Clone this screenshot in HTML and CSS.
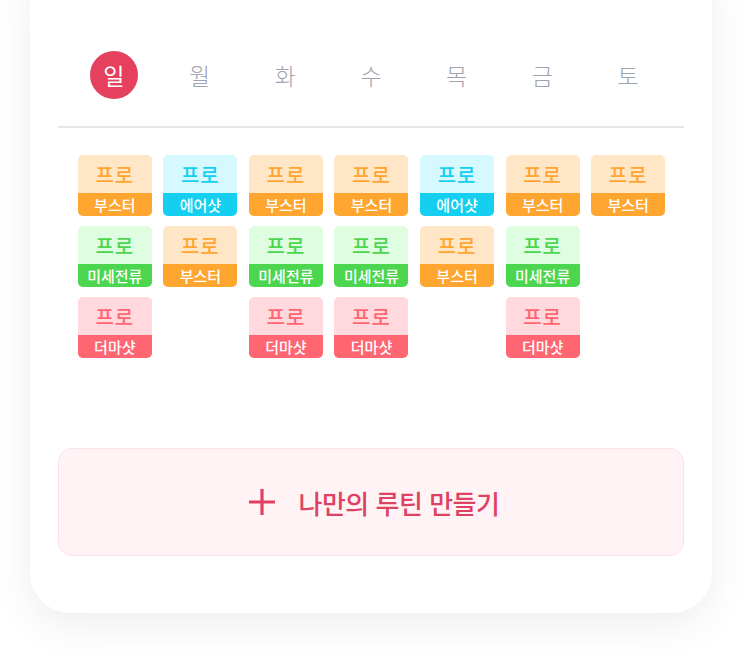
FILE: index.html
```html
<!DOCTYPE html>
<html lang="ko">
<head>
    <meta charset="UTF-8">
    <meta name="viewport" content="width=device-width, initial-scale=1.0">
    <title>루틴</title>
    <link rel="stylesheet" href="styles.css">
</head>
<body>
    <div class="card">
        <div class="days">
            <div class="day active">일</div>
            <div class="day">월</div>
            <div class="day">화</div>
            <div class="day">수</div>
            <div class="day">목</div>
            <div class="day">금</div>
            <div class="day">토</div>
        </div>

        <div class="divider"></div>

        <div class="tiles">
            <!-- row 1 -->
            <div class="tile orange"><span class="top">프로</span><span class="label">부스터</span></div>
            <div class="tile cyan"><span class="top">프로</span><span class="label">에어샷</span></div>
            <div class="tile orange"><span class="top">프로</span><span class="label">부스터</span></div>
            <div class="tile orange"><span class="top">프로</span><span class="label">부스터</span></div>
            <div class="tile cyan"><span class="top">프로</span><span class="label">에어샷</span></div>
            <div class="tile orange"><span class="top">프로</span><span class="label">부스터</span></div>
            <div class="tile orange"><span class="top">프로</span><span class="label">부스터</span></div>

            <!-- row 2 -->
            <div class="tile green"><span class="top">프로</span><span class="label">미세전류</span></div>
            <div class="tile orange"><span class="top">프로</span><span class="label">부스터</span></div>
            <div class="tile green"><span class="top">프로</span><span class="label">미세전류</span></div>
            <div class="tile green"><span class="top">프로</span><span class="label">미세전류</span></div>
            <div class="tile orange"><span class="top">프로</span><span class="label">부스터</span></div>
            <div class="tile green"><span class="top">프로</span><span class="label">미세전류</span></div>
            <div class="empty"></div>

            <!-- row 3 -->
            <div class="tile red"><span class="top">프로</span><span class="label">더마샷</span></div>
            <div class="empty"></div>
            <div class="tile red"><span class="top">프로</span><span class="label">더마샷</span></div>
            <div class="tile red"><span class="top">프로</span><span class="label">더마샷</span></div>
            <div class="empty"></div>
            <div class="tile red"><span class="top">프로</span><span class="label">더마샷</span></div>
            <div class="empty"></div>
        </div>

        <button class="make-routine">
            <svg class="plus" width="26" height="26" viewBox="0 0 26 26">
                <path d="M13 0 V26 M0 13 H26" stroke="#e0405f" stroke-width="3.2" fill="none"/>
            </svg>
            <span>나만의 루틴 만들기</span>
        </button>
    </div>
</body>
</html>
```

FILE: styles.css
```css
body {
    margin: 0;
    background: #fff;
    font-family: "Noto Sans CJK KR", "Noto Sans", sans-serif;
    height: 661px;
    overflow: hidden;
}

.card {
    width: 682px;
    margin: -40px 0 0 30px;
    padding: 91px 28px 57px;
    box-sizing: border-box;
    background: #fff;
    border-radius: 40px;
    box-shadow: 0 12px 40px rgba(0, 0, 0, 0.07);
}

.days {
    display: grid;
    grid-template-columns: repeat(7, 1fr);
    margin: 0 13px;
}

.day {
    justify-self: center;
    width: 48px;
    height: 48px;
    border-radius: 50%;
    display: flex;
    justify-content: center;
    align-items: center;
    font-size: 23px;
    font-weight: 300;
    color: #9fa3ae;
}

.day.active {
    background: #e5405e;
    color: #fff;
    font-weight: 400;
}

.divider {
    height: 2px;
    background: #e6e6e8;
    margin-top: 27px;
}

.tiles {
    display: grid;
    grid-template-columns: repeat(7, 1fr);
    row-gap: 10px;
    margin: 27px 13px 0 14px;
}

.tile,
.empty {
    justify-self: center;
    width: 74px;
    height: 61px;
}

.tile {
    display: flex;
    flex-direction: column;
    border-radius: 5px;
    overflow: hidden;
}

.tile .top {
    flex: 1;
    display: flex;
    justify-content: center;
    align-items: center;
    font-size: 20px;
    font-weight: 500;
    letter-spacing: 1px;
}

.tile .label {
    height: 23px;
    line-height: 23px;
    text-align: center;
    font-size: 15px;
    font-weight: 500;
    color: #fff;
}

.tile.orange { background: #ffe6c7; color: #ffa630; }
.tile.orange .label { background: #ffa630; }

.tile.cyan { background: #d6f8ff; color: #14cff0; }
.tile.cyan .label { background: #14cff0; }

.tile.green { background: #dffde0; color: #4cd650; }
.tile.green .label { background: #4cd650; }

.tile.red { background: #ffd9dd; color: #ff6672; }
.tile.red .label { background: #ff6672; }

.make-routine {
    display: flex;
    justify-content: center;
    align-items: center;
    gap: 24px;
    width: 100%;
    height: 108px;
    margin-top: 90px;
    padding: 0 0 0 6px;
    background: #fff3f6;
    border: 1px solid #fbe1e8;
    border-radius: 14px;
    font-family: inherit;
    font-size: 26px;
    font-weight: 500;
    letter-spacing: -0.5px;
    color: #de4262;
    cursor: pointer;
}
```
